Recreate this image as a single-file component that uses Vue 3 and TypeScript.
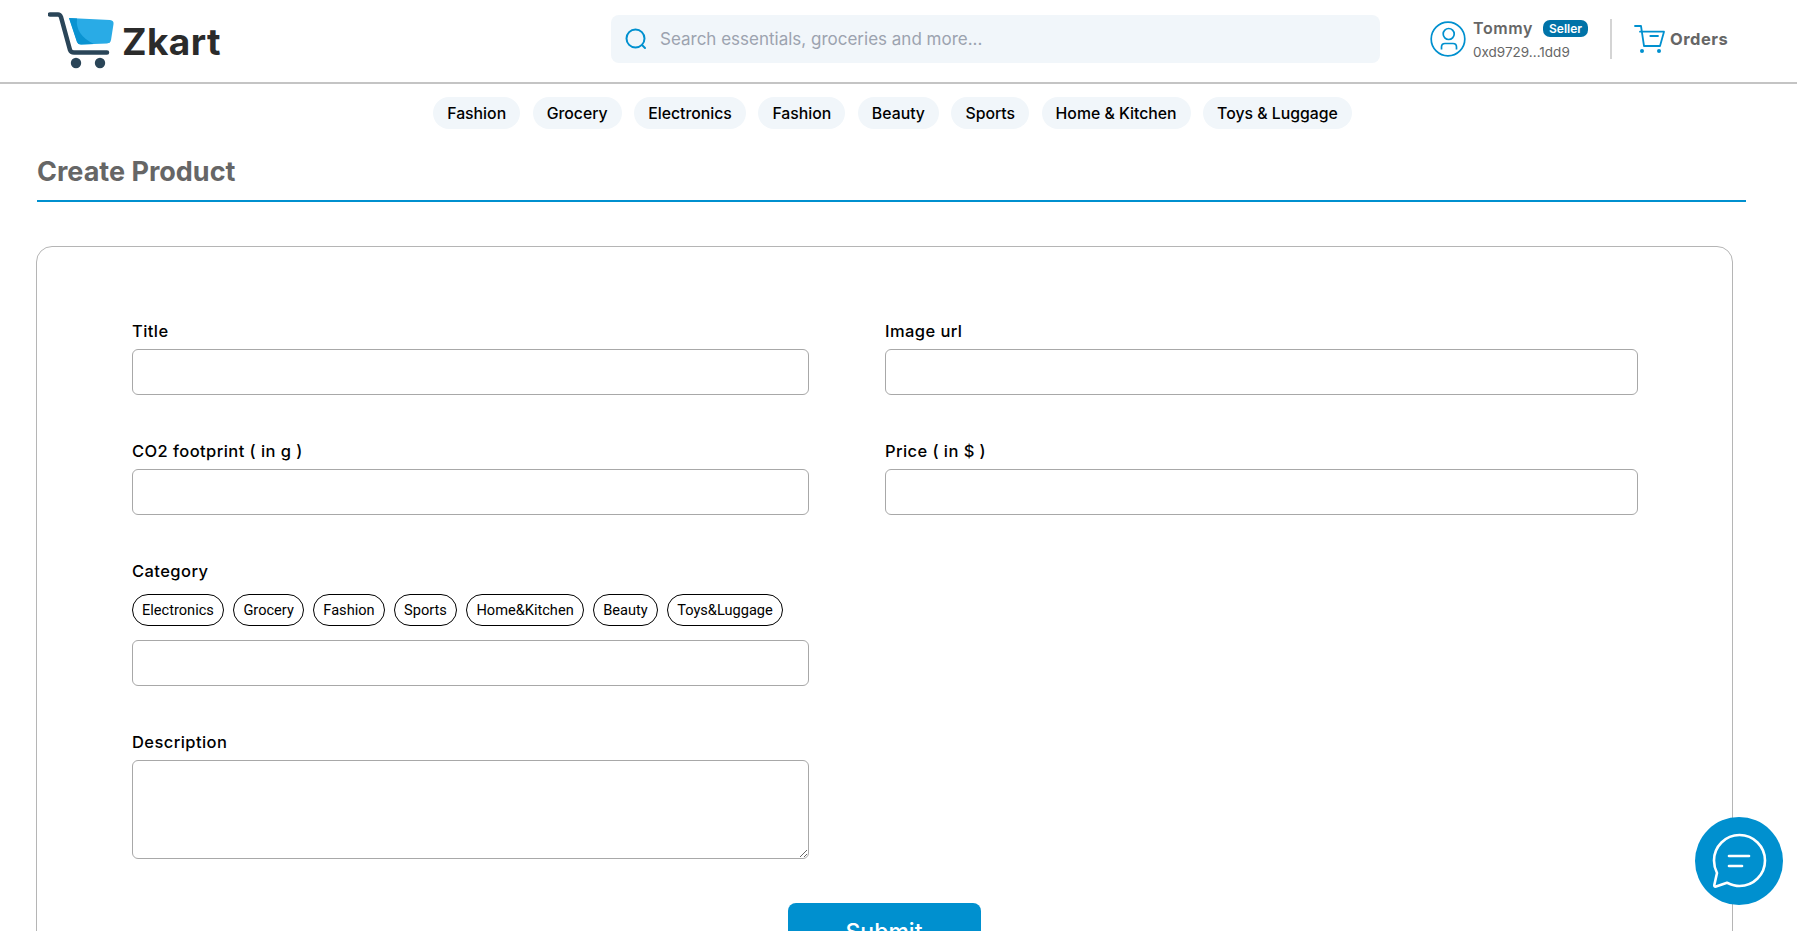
<script setup lang="ts">
const navItems: string[] = ['Fashion', 'Grocery', 'Electronics', 'Fashion', 'Beauty', 'Sports', 'Home & Kitchen', 'Toys & Luggage']
const cats: string[] = ['Electronics', 'Grocery', 'Fashion', 'Sports', 'Home&Kitchen', 'Beauty', 'Toys&Luggage']
</script>

<template>
  <div class="page">
    <header class="header">
      <div class="brand">
        <svg class="logo" width="78" height="58" viewBox="0 0 78 58">
          <path d="M21 7 L62 9 Q66 9.500 65.500 13 L63 29 Q62.500 32 59 32.500 L33 33.500 Q30 33.500 29 31 Z" fill="#29abe6"/>
          <path d="M21 7 L29 7.500 Q27 24 46 33 L33 33.500 Q30 33.500 29 31 Z" fill="#0a93d1"/>
          <path d="M2 3.500 H10 Q12 3.500 13 6 L22 39 Q23 41.500 26 41.500 H59" fill="none" stroke="#2a4558" stroke-width="4.500" stroke-linecap="round" stroke-linejoin="round"/>
          <circle cx="28" cy="52" r="5.200" fill="#2a4558"/>
          <circle cx="52" cy="52" r="5.200" fill="#2a4558"/>
        </svg>
        <span class="brand-name">Zkart</span>
      </div>
      <div class="search">
        <svg width="24" height="24" viewBox="0 0 24 24" fill="none" stroke="#0090cf" stroke-width="2" stroke-linecap="round">
          <circle cx="11.500" cy="11.500" r="9"/>
          <path d="M18.500 18.500 L21 21"/>
        </svg>
        <span class="placeholder">Search essentials, groceries and more...</span>
      </div>
      <div class="account">
        <svg width="36" height="36" viewBox="0 0 36 36" fill="none" stroke="#0090cf" stroke-width="1.700">
          <circle cx="18" cy="18" r="16.800"/>
          <circle cx="18.700" cy="13" r="5.500"/>
          <path d="M11.500 28.500 V26 Q11.500 22.500 15 22.500 H23 Q26.500 22.500 26.500 26 V28.500"/>
        </svg>
        <div class="who">
          <div class="who-top"><span class="who-name">Tommy</span><span class="badge">Seller</span></div>
          <div class="who-addr">0xd9729...1dd9</div>
        </div>
        <span class="divider"></span>
        <svg class="orders-icon" width="32" height="30" viewBox="0 0 32 30" fill="none" stroke="#0090cf" stroke-width="1.800" stroke-linecap="round" stroke-linejoin="round">
          <path d="M1 1 H7 L10 21 H26 L30 6.700 H6"/>
          <path d="M16.300 11 H24"/>
          <circle cx="8" cy="26" r="2" fill="#0090cf" stroke="none"/>
          <circle cx="25" cy="26" r="2" fill="#0090cf" stroke="none"/>
        </svg>
        <span class="orders">Orders</span>
      </div>
    </header>

    <nav class="nav">
      <span v-for="(n, i) in navItems" :key="i" class="pill">{{ n }}</span>
    </nav>

    <main class="main">
      <h1 class="title">Create Product</h1>
      <section class="card">
        <div class="grid">
          <div class="field">
            <label class="label">Title</label>
            <input class="input" type="text" />
          </div>
          <div class="field">
            <label class="label">Image url</label>
            <input class="input" type="text" />
          </div>
          <div class="field">
            <label class="label">CO2 footprint ( in g )</label>
            <input class="input" type="text" />
          </div>
          <div class="field">
            <label class="label">Price ( in $ )</label>
            <input class="input" type="text" />
          </div>
          <div class="field">
            <label class="label">Category</label>
            <div class="chips">
              <span v-for="c in cats" :key="c" class="chip">{{ c }}</span>
            </div>
            <input class="input" type="text" />
          </div>
          <div></div>
          <div class="field">
            <label class="label">Description</label>
            <textarea class="input area"></textarea>
          </div>
        </div>
        <div class="actions"><button class="submit" type="button">Submit</button></div>
      </section>
    </main>

    <button class="chat" type="button" aria-label="Chat">
      <svg width="56" height="56" viewBox="0 0 56 56" fill="none" stroke="#fff" stroke-width="2.600" stroke-linecap="round" stroke-linejoin="round">
        <path d="M28.500 2 A25.500 25.500 0 1 1 28.500 53 C24 53 20 51.500 16 49.700 L5 53.500 Q3 54 3.300 52 L6 40 C4 36 3 32 3 27.500 A25.500 25.500 0 0 1 28.500 2 Z"/>
        <path d="M18 23 H38"/>
        <path d="M18 33 H31"/>
      </svg>
    </button>
  </div>
</template>

<style>
html, body { margin: 0; background: #fff; overflow: hidden; }
</style>

<style scoped>
.page {
  position: relative;
  height: 931px;
  overflow: hidden;
  font-family: Inter, "Liberation Sans", sans-serif;
  color: #000;
  background: #fff;
}
.header {
  height: 78px;
  padding-bottom: 4px;
  border-bottom: 2px solid #c4c4c4;
  display: flex;
  align-items: center;
  padding-left: 48px;
  box-sizing: content-box;
}
.brand { display: flex; align-items: center; gap: 2px; width: 563px; }
.logo { display: block; margin-top: 1.500px; }
.brand-name { font-size: 37px; font-weight: 700; color: #2b2b2b; letter-spacing: 0.400px; margin-left: -6px; padding-top: 4px; }
.search {
  width: 769px;
  height: 48px;
  background: #f1f6fa;
  border-radius: 8px;
  display: flex;
  align-items: center;
  box-sizing: border-box;
  padding-left: 13px;
  gap: 12px;
  flex: none;
}
.placeholder { font-size: 17px; color: #9ca3af; }
.account { display: flex; align-items: center; margin-left: 50px; }
.who { margin-left: 7px; }
.who-top { display: flex; align-items: center; gap: 10px; }
.who-name { font-size: 16px; font-weight: 600; color: #666; letter-spacing: 0.600px; }
.badge { background: #0073a8; color: #fff; font-size: 12px; font-weight: 600; border-radius: 7px; padding: 1px 6px; }
.who-addr { font-size: 13.500px; color: #666; margin-top: 6px; }
.divider { width: 2px; height: 40px; background: #d4d4d4; margin: 0 22px; }
.orders-icon { display: block; margin-top: 2px; }
.orders { font-size: 16.500px; font-weight: 700; color: #666; margin-left: 4px; letter-spacing: 0.500px; }
.nav {
  display: flex;
  justify-content: center;
  gap: 12.500px;
  padding: 13px 12px 0 0;
}
.pill {
  height: 32px;
  box-sizing: border-box;
  padding: 0 14px;
  background: #f1f6fa;
  border-radius: 16px;
  font-size: 15.800px;
  font-weight: 500;
  display: flex;
  align-items: center;
}
.main { padding: 8px 51px 0 37px; }
.title {
  margin: 0;
  height: 65px;
  padding-top: 18px;
  box-sizing: border-box;
  border-bottom: 2px solid #0090cf;
  font-size: 27px;
  line-height: 34px;
  font-weight: 700;
  color: #666;
}
.card {
  margin: 44px 13px 0 -1px;
  border: 1px solid #b5b5b5;
  border-radius: 16px;
  padding: 74px 94px 40px 95px;
  height: 900px;
  box-sizing: border-box;
}
.grid {
  display: grid;
  grid-template-columns: 677px 753px;
  column-gap: 76px;
  row-gap: 46px;
}
.field { display: flex; flex-direction: column; }
.label { font-size: 16.500px; font-weight: 500; line-height: 20px; margin-bottom: 8px; letter-spacing: 0.430px; }
.input {
  height: 46px;
  border: 1px solid #a8a8a8;
  border-radius: 6px;
  box-sizing: border-box;
  background: #fff;
  outline: none;
  display: block;
  width: 100%;
  margin: 0;
  padding: 0 8px;
}
.area { height: 99px; resize: vertical; }
.chips { display: flex; gap: 9.500px; margin-top: 5px; margin-bottom: 14px; }
.chip {
  height: 32px;
  box-sizing: border-box;
  border: 1px solid #000;
  border-radius: 16px;
  padding: 0 9px;
  font-family: Roboto, sans-serif;
  font-size: 14.600px;
  display: flex;
  align-items: center;
}
.actions { display: flex; justify-content: center; margin-top: 44px; padding-right: 2px; }
.submit {
  width: 193px;
  height: 58px;
  background: #0090cf;
  color: #fff;
  border: none;
  border-radius: 8px;
  font-family: Inter, sans-serif;
  font-size: 23px;
  font-weight: 500;
}
.chat {
  position: absolute;
  left: 1695px;
  top: 817px;
  width: 88px;
  height: 88px;
  border-radius: 50%;
  border: none;
  background: #0090cf;
  padding: 0;
  display: flex;
  align-items: center;
  justify-content: center;
}
</style>
